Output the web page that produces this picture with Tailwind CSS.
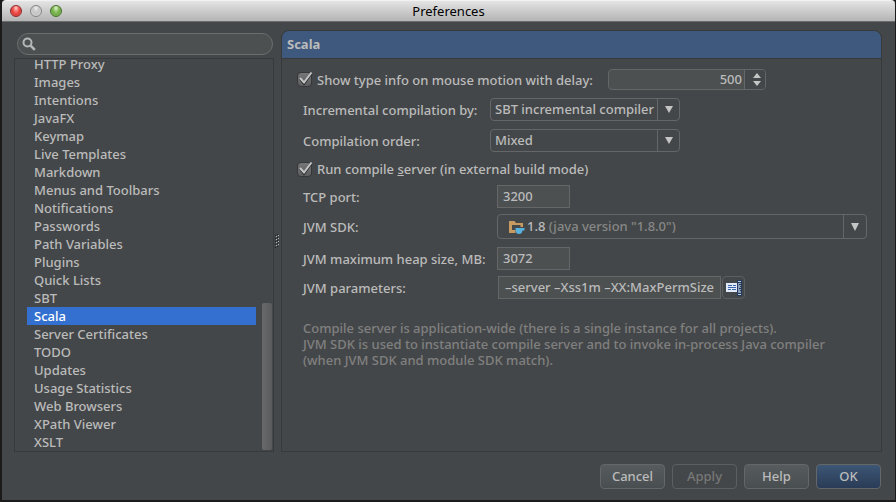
<!DOCTYPE html>
<html lang="en">
<head>
<meta charset="utf-8">
<title>Preferences</title>
<script src="https://cdn.jsdelivr.net/npm/@tailwindcss/browser@4"></script>
</head>
<body class="bg-[#1c1b1c] font-['Noto_Sans',sans-serif] text-[13px] leading-4 font-medium text-[#bbbbbb]">
<div class="flex h-screen flex-col pl-[2px] pr-px pb-[2px]">
  <header class="relative flex h-[22px] shrink-0 items-center justify-center rounded-t border-t border-b border-t-[#f2f2f2] border-b-[#6a6c6d] bg-linear-to-b from-[#e4e4e4] to-[#b4b4b4]">
    <div class="absolute left-2 top-1 flex gap-2">
      <button aria-label="Close" class="size-3 rounded-full border border-[#8e2a2a] bg-[radial-gradient(ellipse_at_50%_20%,#ffd0cc_0%,#f25a55_40%,#e03a36_65%,#ff9a8c_100%)]"></button>
      <button aria-label="Minimize" class="size-3 rounded-full border border-[#858585] bg-[radial-gradient(ellipse_at_50%_20%,#eeeeee_0%,#c4c4c4_45%,#dedede_100%)]"></button>
      <button aria-label="Zoom" class="size-3 rounded-full border border-[#49702c] bg-[radial-gradient(ellipse_at_50%_20%,#e4f6d0_0%,#85bd5c_40%,#6dab45_65%,#c6f09a_100%)]"></button>
    </div>
    <h1 class="font-normal text-black">Preferences</h1>
  </header>

  <div class="flex min-h-0 flex-1 flex-col bg-[#444749] pt-2 pr-[13px] pl-3">
    <div class="flex min-h-0 flex-1">
      <aside class="flex w-[260px] shrink-0 flex-col">
        <label class="mt-[3px] mr-px mb-[3px] ml-[3px] flex h-[22px] shrink-0 items-center rounded-full border border-[#6b6d6e] bg-[#4c5051] pl-1">
          <svg class="size-[14px] shrink-0" viewBox="0 0 14 14" fill="none" stroke="#b5b7b8" aria-hidden="true"><circle cx="5.5" cy="5.5" r="4" stroke-width="2"/><path d="M8.6 8.6L12.8 12.8" stroke-width="2.6"/></svg>
          <input type="search" aria-label="Search settings" class="ml-1 min-w-0 flex-1 bg-transparent outline-none">
        </label>
        <nav aria-label="Settings" class="relative flex min-h-0 flex-1 flex-col justify-end overflow-hidden border border-[#37393b] pl-3 pr-[17px]">
          <a href="#" class="h-[18px] shrink-0 pl-[7px] leading-[18px]">HTTP Proxy</a>
          <a href="#" class="h-[18px] shrink-0 pl-[7px] leading-[18px]">Images</a>
          <a href="#" class="h-[18px] shrink-0 pl-[7px] leading-[18px]">Intentions</a>
          <a href="#" class="h-[18px] shrink-0 pl-[7px] leading-[18px]">JavaFX</a>
          <a href="#" class="h-[18px] shrink-0 pl-[7px] leading-[18px]">Keymap</a>
          <a href="#" class="h-[18px] shrink-0 pl-[7px] leading-[18px]">Live Templates</a>
          <a href="#" class="h-[18px] shrink-0 pl-[7px] leading-[18px]">Markdown</a>
          <a href="#" class="h-[18px] shrink-0 pl-[7px] leading-[18px]">Menus and Toolbars</a>
          <a href="#" class="h-[18px] shrink-0 pl-[7px] leading-[18px]">Notifications</a>
          <a href="#" class="h-[18px] shrink-0 pl-[7px] leading-[18px]">Passwords</a>
          <a href="#" class="h-[18px] shrink-0 pl-[7px] leading-[18px]">Path Variables</a>
          <a href="#" class="h-[18px] shrink-0 pl-[7px] leading-[18px]">Plugins</a>
          <a href="#" class="h-[18px] shrink-0 pl-[7px] leading-[18px]">Quick Lists</a>
          <a href="#" class="h-[18px] shrink-0 pl-[7px] leading-[18px]">SBT</a>
          <a href="#" aria-current="page" class="h-[18px] shrink-0 bg-[#3470d0] pl-[7px] leading-[18px] text-white">Scala</a>
          <a href="#" class="h-[18px] shrink-0 pl-[7px] leading-[18px]">Server Certificates</a>
          <a href="#" class="h-[18px] shrink-0 pl-[7px] leading-[18px]">TODO</a>
          <a href="#" class="h-[18px] shrink-0 pl-[7px] leading-[18px]">Updates</a>
          <a href="#" class="h-[18px] shrink-0 pl-[7px] leading-[18px]">Usage Statistics</a>
          <a href="#" class="h-[18px] shrink-0 pl-[7px] leading-[18px]">Web Browsers</a>
          <a href="#" class="h-[18px] shrink-0 pl-[7px] leading-[18px]">XPath Viewer</a>
          <a href="#" class="h-[18px] shrink-0 pl-[7px] leading-[18px]">XSLT</a>
          <div class="absolute right-px bottom-px h-[147px] w-[10px] rounded-xs bg-linear-to-r from-[#68696a] to-[#595b5c]"></div>
        </nav>
      </aside>

      <div class="flex w-[7px] shrink-0 items-center justify-center">
        <svg class="h-[14px] w-[5px]" viewBox="0 0 5 14" aria-hidden="true"><path d="M0 1h1v1H0zM2 0h1v1H2zM0 4h1v1H0zM2 3h1v1H2zM0 7h1v1H0zM2 6h1v1H2zM0 10h1v1H0zM2 9h1v1H2zM0 13h1v1H0zM2 12h1v1H2z" fill="#1f2021"/><path d="M1 2h1v1H1zM3 1h1v1H3zM1 5h1v1H1zM3 4h1v1H3zM1 8h1v1H1zM3 7h1v1H3zM1 11h1v1H1zM3 10h1v1H3z" fill="#b5b7b8"/></svg>
      </div>

      <main class="min-w-0 flex-1 overflow-hidden rounded-t-lg border border-[#37393b]">
        <h2 class="flex h-7 items-center border-b border-[#37393b] bg-[#3e587e] pl-[5px] pb-px font-bold">Scala</h2>
        <form class="flex flex-col pt-[10px] pr-[14px] pl-[15px]">
          <div class="flex h-[21px] items-center">
            <span class="relative mr-[5px] size-[15px]">
              <input id="typeinfo" type="checkbox" checked class="block size-[15px] appearance-none rounded-sm border border-[#353739] bg-linear-to-b from-[#747677] to-[#5c5e5f]">
              <svg class="pointer-events-none absolute inset-0 overflow-visible" viewBox="0 0 15 15" fill="none" aria-hidden="true"><path d="M3 7L7 12L14.500 1.500" stroke="#2d2f30" stroke-width="2"/><path d="M3 6L7 10.500L14.500 0.500" stroke="#c4c5c5" stroke-width="2"/></svg>
            </span>
            <label for="typeinfo" class="w-[291px] shrink-0 whitespace-nowrap">Show type info on mouse motion with delay:</label>
            <span class="flex h-[21px] w-[158px] overflow-hidden rounded border border-[#646667] bg-[#4c5051]">
              <input type="number" value="500" aria-label="Delay" class="w-[136px] [appearance:textfield] border-r border-[#646667] pr-[2px] pb-px text-right outline-none [&::-webkit-inner-spin-button]:appearance-none">
              <span class="flex flex-1 flex-col items-center justify-center gap-[3px] bg-[#444749] pl-1">
                <button type="button" aria-label="Increase"><svg class="block h-[5px] w-2" viewBox="0 0 8 5" fill="#c4c5c5"><path d="M0 5L4 0L8 5z"/></svg></button>
                <button type="button" aria-label="Decrease"><svg class="block h-[5px] w-2" viewBox="0 0 8 5" fill="#c4c5c5"><path d="M0 0L4 5L8 0z"/></svg></button>
              </span>
            </span>
          </div>

          <div class="mt-2 flex h-[23px] items-center pl-[6px]">
            <label for="incr" class="w-[187px] shrink-0">Incremental compilation by:</label>
            <span class="relative flex h-[23px] w-[190px]">
              <select id="incr" class="w-full appearance-none rounded border border-[#646667] pl-1 pb-px outline-none"><option>SBT incremental compiler</option><option>IDEA</option></select>
              <span class="pointer-events-none absolute inset-y-0 right-0 flex w-[23px] items-center justify-center border-l border-[#646667]"><svg class="h-[7px] w-2" viewBox="0 0 8 7" fill="#c4c5c5" aria-hidden="true"><path d="M0 0H8L4 7z"/></svg></span>
            </span>
          </div>

          <div class="mt-2 flex h-[23px] items-center pl-[6px]">
            <label for="order" class="w-[187px] shrink-0">Compilation order:</label>
            <span class="relative flex h-[23px] w-[190px]">
              <select id="order" class="w-full appearance-none rounded border border-[#646667] pl-1 pb-px outline-none"><option>Mixed</option><option>Java then Scala</option></select>
              <span class="pointer-events-none absolute inset-y-0 right-0 flex w-[23px] items-center justify-center border-l border-[#646667]"><svg class="h-[7px] w-2" viewBox="0 0 8 7" fill="#c4c5c5" aria-hidden="true"><path d="M0 0H8L4 7z"/></svg></span>
            </span>
          </div>

          <div class="mt-[9px] flex h-4 items-center">
            <span class="relative mr-[5px] size-[15px]">
              <input id="server" type="checkbox" checked class="block size-[15px] appearance-none rounded-sm border border-[#353739] bg-linear-to-b from-[#747677] to-[#5c5e5f]">
              <svg class="pointer-events-none absolute inset-0 overflow-visible" viewBox="0 0 15 15" fill="none" aria-hidden="true"><path d="M3 7L7 12L14.500 1.500" stroke="#2d2f30" stroke-width="2"/><path d="M3 6L7 10.500L14.500 0.500" stroke="#c4c5c5" stroke-width="2"/></svg>
            </span>
            <label for="server">Run compile <u>s</u>erver (in external build mode)</label>
          </div>

          <div class="mt-2 flex h-[23px] items-center pl-[6px]">
            <label for="port" class="w-[194px] shrink-0">TCP port:</label>
            <input id="port" value="3200" class="h-[23px] w-[73px] border border-[#646667] bg-[#4c5051] pl-[5px] pb-px outline-none">
          </div>

          <div class="mt-[6px] flex h-[25px] items-center pl-[6px]">
            <label for="sdk" class="w-[194px] shrink-0">JVM SDK:</label>
            <span class="relative flex h-[25px] min-w-0 flex-1 items-center rounded border border-[#646667] pl-[10px]">
              <svg class="mr-[2px] h-4 w-[17px]" viewBox="0 0 17 16" aria-hidden="true"><path fill-rule="evenodd" d="M1 2H6.500L8 4H15V8H7.500V14H1zM4 6V11H7.500V8H12.500V6z" fill="#c79a62"/><path d="M7.500 9H16.500V11.500H14.500Q14 15 11 15Q8 15 7.500 11.500z" fill="#58b2dc"/></svg>
              <span aria-hidden="true" class="whitespace-nowrap pb-px">1.8 <span class="text-[#878787]">(java version "1.8.0")</span></span>
              <span class="ml-auto flex h-full w-[23px] items-center justify-center border-l border-[#646667]"><svg class="h-2 w-2" viewBox="0 0 8 8" fill="#c4c5c5" aria-hidden="true"><path d="M0 0H8L4 8z"/></svg></span>
              <select id="sdk" class="absolute inset-0 opacity-0"><option value="1.8" label="1.8"></option></select>
            </span>
          </div>

          <div class="mt-2 flex h-[23px] items-center pl-[6px]">
            <label for="heap" class="w-[194px] shrink-0 whitespace-nowrap">JVM maximum heap size, MB:</label>
            <input id="heap" value="3072" class="h-[23px] w-[73px] border border-[#646667] bg-[#4c5051] pl-[5px] pb-px outline-none">
          </div>

          <div class="mt-[6px] flex h-[23px] items-center pl-[6px]">
            <label for="params" class="w-[195px] shrink-0">JVM parameters:</label>
            <input id="params" value="–server –Xss1m –XX:MaxPermSize" class="h-[23px] w-[223px] border border-[#646667] bg-[#4c5051] px-[6px] pb-px outline-none">
            <button type="button" aria-label="Expand" class="ml-px flex h-[23px] w-[23px] items-center justify-center rounded-sm border border-[#5c5e5f]">
              <svg class="h-4 w-4 shrink-0" viewBox="0 0 16 16" aria-hidden="true"><path d="M0 3H11V12H0z" fill="#dfe9f8"/><path d="M2 5.500H6M7 5.500H10M2 7.500H10M2 9.500H5M6 9.500H10" stroke="#3c62ac"/><path d="M11 0H16V16H11z" fill="#253a5a"/><path d="M12 3H15V13H12z" fill="#8b9db6"/><path d="M12 1.500H15M12 14.500H15" stroke="#b7c6da"/><path d="M13 4.500H15M14 6.500H15M13 8.500H15M14 10.500H15" stroke="#253a5a"/></svg>
            </button>
          </div>

          <p class="mt-[21px] pl-[6px] text-[#808080]">Compile server is application-wide (there is a single instance for all projects).<br>JVM SDK is used to instantiate compile server and to invoke in-process Java compiler<br>(when JVM SDK and module SDK match).</p>
        </form>
      </main>
    </div>

    <footer class="flex h-12 shrink-0 items-start justify-end gap-[7px] pt-3 pr-px">
      <button class="h-[25px] w-[65px] rounded border border-[#646667] bg-linear-to-b from-[#565c5e] to-[#494e50] pb-px">Cancel</button>
      <button disabled class="h-[25px] w-[65px] rounded border border-[#5c5e5f] pb-px text-[#777777]">Apply</button>
      <button class="h-[25px] w-[65px] rounded border border-[#646667] bg-linear-to-b from-[#565c5e] to-[#494e50] pb-px">Help</button>
      <button class="h-[25px] w-[65px] rounded border border-[#646667] bg-linear-to-b from-[#3c5675] to-[#2a3c57] pb-px">OK</button>
    </footer>
  </div>
</div>
</body>
</html>
